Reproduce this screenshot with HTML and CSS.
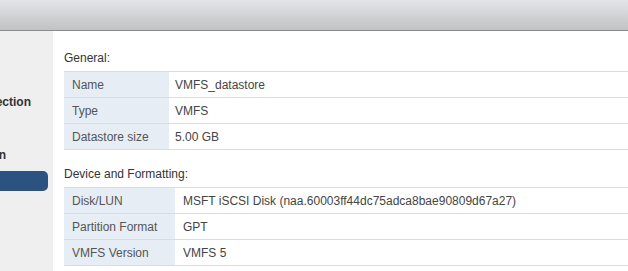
FILE: index.html
```html
<!DOCTYPE html>
<html>
<head>
<meta charset="utf-8">
<link rel="stylesheet" href="styles.css">
</head>
<body>
<div class="header"></div>
<div class="main">
  <nav class="sidebar">
    <div class="step step-one"><span>3 Name and device selection</span></div>
    <div class="step step-two"><span>4 Partition configuration</span></div>
    <div class="step step-active"><span>5 Ready to complete</span></div>
  </nav>
  <div class="content">
    <div class="section-title">General:</div>
    <table class="props props-general">
      <tr><td class="label">Name</td><td class="value">VMFS_datastore</td></tr>
      <tr><td class="label">Type</td><td class="value">VMFS</td></tr>
      <tr><td class="label">Datastore size</td><td class="value">5.00 GB</td></tr>
    </table>
    <div class="section-title second">Device and Formatting:</div>
    <table class="props props-device">
      <tr><td class="label">Disk/LUN</td><td class="value">MSFT iSCSI Disk (naa.60003ff44dc75adca8bae90809d67a27)</td></tr>
      <tr><td class="label">Partition Format</td><td class="value">GPT</td></tr>
      <tr><td class="label">VMFS Version</td><td class="value">VMFS 5</td></tr>
    </table>
  </div>
</div>
</body>
</html>
```
FILE: styles.css
```css
html, body {
  margin: 0;
  padding: 0;
  background: #ffffff;
  font-family: "Liberation Sans", Arial, sans-serif;
  font-size: 12px;
  color: #444;
  overflow: hidden;
}
.header {
  height: 30px;
  background: linear-gradient(#e4e5e8, #c1c2c4);
  border-bottom: 1px solid #8a8a8a;
}
.main {
  display: flex;
  height: 240px;
}
.sidebar {
  width: 53px;
  flex: none;
  background: #efefef;
  overflow: hidden;
  display: flex;
  flex-direction: column;
  padding-top: 61px;
  box-sizing: border-box;
}
.step {
  display: flex;
  justify-content: flex-end;
  white-space: nowrap;
  height: 20px;
  line-height: 20px;
  font-weight: bold;
  color: #333;
}
.step-one { padding-right: 22px; }
.step-two { margin-top: 33px; padding-right: 47px; }
.step-active {
  margin-top: 6px;
  width: 48px;
  background: #2c5282;
  border-radius: 0 5px 5px 0;
  color: #2c5282;
}
.content {
  flex: 1;
  overflow: hidden;
  padding: 19px 0 0 11px;
}
.section-title {
  line-height: 16px;
  color: #333;
  margin-bottom: 5px;
}
.section-title.second { margin-top: 16px; }
.props {
  border-collapse: collapse;
  width: 700px;
  border-top: 1px solid #dcdcdc;
}
.props td {
  height: 25px;
  padding: 0;
  border-bottom: 1px solid #dcdcdc;
  white-space: nowrap;
}
.props .label {
  background: #e6edf5;
  color: #555;
  padding-left: 8px;
}
.props .value {
  color: #444;
}
.props-general .label { width: 97px; }
.props-general .value { padding-left: 6px; }
.props-device .label { width: 103px; }
.props-device .value { padding-left: 8px; }
```
